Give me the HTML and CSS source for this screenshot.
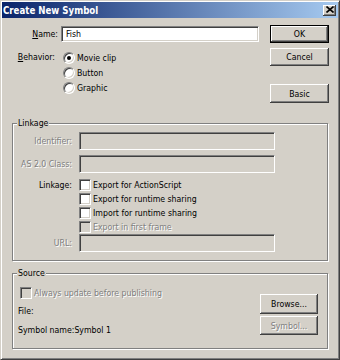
FILE: index.html
```html
<!DOCTYPE html>
<html>
<head>
<meta charset="utf-8">
<link rel="stylesheet" href="styles.css">
</head>
<body>
<div class="window">
  <div class="titlebar">
    <span class="title">Create New Symbol</span>
    <span class="close"><svg width="8" height="7" viewBox="0 0 8 7"><path d="M0.5 0.5L7.5 6.5M7.5 0.5L0.5 6.5" stroke="#000" stroke-width="1.6"/></svg></span>
  </div>
  <div class="top">
    <div class="form">
      <div class="name-row">
        <span class="lbl name-lbl"><u>N</u>ame:</span>
        <div class="input">Fish</div>
      </div>
      <div class="behavior">
        <span class="lbl beh-lbl"><u>B</u>ehavior:</span>
        <div class="radios">
          <div class="radio-row"><span class="radio checked"></span><span>Movie clip</span></div>
          <div class="radio-row"><span class="radio"></span><span>Button</span></div>
          <div class="radio-row"><span class="radio"></span><span>Graphic</span></div>
        </div>
      </div>
    </div>
    <div class="buttons">
      <div class="btn default">OK</div>
      <div class="btn cancel">Cancel</div>
      <div class="btn basic">Basic</div>
    </div>
  </div>

  <div class="group linkage">
    <span class="legend">Linkage</span>
    <div class="field">
      <span class="flbl disabled">Identifier:</span>
      <div class="input off"></div>
    </div>
    <div class="field gap">
      <span class="flbl disabled">AS 2.0 Class:</span>
      <div class="input off"></div>
    </div>
    <div class="checks-field">
      <span class="flbl">Linkage:</span>
      <div class="checks">
        <div class="check-row"><span class="box"></span><span>Export for ActionScript</span></div>
        <div class="check-row"><span class="box"></span><span>Export for runtime sharing</span></div>
        <div class="check-row"><span class="box"></span><span>Import for runtime sharing</span></div>
        <div class="check-row"><span class="box off"></span><span class="disabled">Export in first frame</span></div>
      </div>
    </div>
    <div class="field">
      <span class="flbl disabled">URL:</span>
      <div class="input off"></div>
    </div>
  </div>

  <div class="group source">
    <span class="legend">Source</span>
    <div class="src-left">
      <div class="check-row src-check"><span class="box off"></span><span class="disabled">Always update before publishing</span></div>
      <div class="src-line file">File:</div>
      <div class="src-line symname">Symbol name:Symbol 1</div>
    </div>
    <div class="src-buttons">
      <div class="btn browse">Browse...</div>
      <div class="btn symbol disabled">Symbol...</div>
    </div>
  </div>
</div>
</body>
</html>
```

FILE: styles.css
```css
* {
  box-sizing: border-box;
  margin: 0;
  padding: 0;
}

body {
  margin: 0;
  background: #d4d0c8;
  font-family: "DejaVu Sans Condensed", "DejaVu Sans", sans-serif;
  font-stretch: condensed;
  font-size: 8.7px;
  color: #000;
}

.window {
  width: 340px;
  height: 360px;
  border: 1px solid;
  border-color: #d4d0c8 #404040 #404040 #d4d0c8;
  box-shadow: inset 1px 1px #fff, inset -1px -1px #808080;
  padding: 1px;
  display: flex;
  flex-direction: column;
}

.titlebar {
  height: 16px;
  flex: none;
  display: flex;
  align-items: center;
  justify-content: space-between;
  background: linear-gradient(to right, #0a246a, #a6caf0);
  padding: 0 2px 0 1px;
  color: #fff;
  font-weight: bold;
  font-size: 9.6px;
}

.close {
  width: 13px;
  height: 11px;
  background: #d4d0c8;
  box-shadow: inset -1px -1px #404040, inset 1px 1px #fff, inset -2px -2px #808080;
  display: flex;
  align-items: center;
  justify-content: center;
  padding-bottom: 1px;
}

.close svg {
  display: block;
}

.top {
  display: flex;
  padding-top: 7px;
}

.form {
  width: 268px;
}

.name-row {
  display: flex;
  align-items: center;
  margin-top: 1px;
}

.lbl {
  text-align: right;
}

.name-lbl {
  width: 56px;
}

.input {
  height: 16px;
  width: 198px;
  margin-left: 3px;
  background: #fff;
  border: 1px solid;
  border-color: #808080 #fff #fff #808080;
  box-shadow: inset 1px 1px #404040, inset -1px -1px #d4d0c8;
  padding-left: 4px;
  line-height: 14px;
}

.input.off {
  background: #d4d0c8;
  height: 18px;
  width: 196px;
  margin-left: 6px;
}

.behavior {
  display: flex;
  margin-top: 8px;
}

.beh-lbl {
  width: 53px;
  line-height: 15px;
}

.radios {
  margin-left: 8px;
}

.radio-row {
  display: flex;
  align-items: center;
  height: 15px;
}

.radio {
  width: 12px;
  height: 12px;
  border-radius: 50%;
  background: #fff;
  border: 1px solid;
  border-color: #808080 #fff #fff #808080;
  box-shadow: inset 1px 1px #404040, inset -1px -1px #d4d0c8;
  margin-right: 2px;
  position: relative;
  flex: none;
}

.radio.checked::after {
  content: "";
  position: absolute;
  left: 3px;
  top: 3px;
  width: 4px;
  height: 4px;
  border-radius: 50%;
  background: #000;
}

.buttons {
  width: 59px;
  display: flex;
  flex-direction: column;
}

.btn {
  height: 18px;
  display: flex;
  align-items: center;
  justify-content: center;
  background: #d4d0c8;
  box-shadow: inset -1px -1px #404040, inset 1px 1px #fff, inset -2px -2px #808080;
}

.btn.default {
  border: 1px solid #000;
}

.btn.cancel {
  margin-top: 5px;
}

.btn.basic {
  margin-top: 18px;
  height: 19px;
}

.group {
  position: relative;
  width: 316px;
  margin-left: 10px;
  border: 1px solid #808080;
  box-shadow: 1px 1px #fff, inset 1px 1px #fff;
}

.legend {
  position: absolute;
  left: 4px;
  top: -6px;
  line-height: 11px;
  padding: 0 1px;
  background: #d4d0c8;
}

.linkage {
  margin-top: 20px;
  padding: 8px 0 8px 0;
}

.field {
  display: flex;
  align-items: center;
  height: 18px;
}

.field.gap {
  margin-top: 5px;
}

.flbl {
  width: 60px;
  text-align: right;
  padding-right: 1px;
  flex: none;
}

.disabled {
  color: #808080;
  text-shadow: 1px 1px #fff;
}

.checks-field {
  display: flex;
  margin-top: 5px;
}

.checks-field .flbl {
  line-height: 14px;
}

.checks {
  margin-left: 6px;
}

.check-row {
  display: flex;
  align-items: center;
  height: 14px;
}

.box {
  width: 12px;
  height: 12px;
  flex: none;
  background: #fff;
  border: 1px solid;
  border-color: #808080 #fff #fff #808080;
  box-shadow: inset 1px 1px #404040, inset -1px -1px #d4d0c8;
  margin-right: 2px;
}

.box.off {
  background: #d4d0c8;
}

.source {
  margin-top: 12px;
  display: flex;
  justify-content: space-between;
  padding: 0 9px 12px 5px;
}

.src-check {
  margin-top: 13px;
  height: 12px;
  margin-left: 2px;
}

.src-line {
  line-height: 12px;
}

.file {
  margin-top: 6px;
}

.symname {
  margin-top: 7px;
}

.src-buttons {
  width: 58px;
  display: flex;
  flex-direction: column;
  align-self: flex-end;
  margin-bottom: 1px;
}

.btn.browse {
  height: 20px;
}

.btn.symbol {
  height: 19px;
  margin-top: 2px;
}
```
